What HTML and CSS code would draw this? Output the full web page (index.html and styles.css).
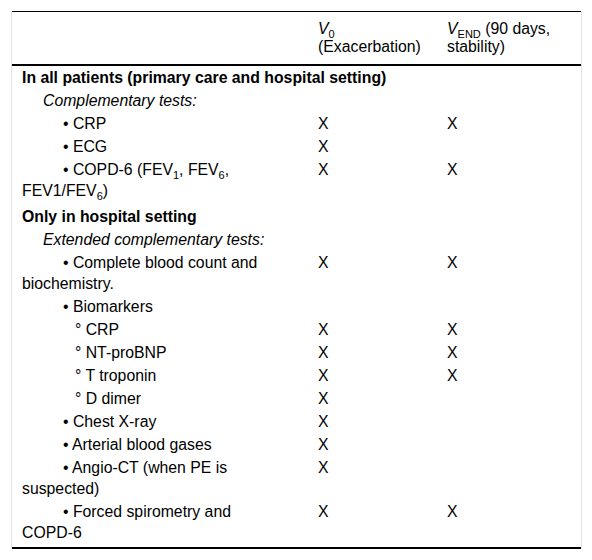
FILE: index.html
```html
<!DOCTYPE html>
<html>
<head>
<meta charset="utf-8">
<link rel="stylesheet" href="styles.css">
</head>
<body>
<div class="wrap">
<table class="tbl">
<colgroup><col class="c1"><col class="c2"><col class="c3"></colgroup>
<thead>
<tr><th></th><th><i>V</i><sub>0</sub><br>(Exacerbation)</th><th><i>V</i><sub>END</sub> (90 days, stability)</th></tr>
</thead>
<tbody>
<tr><td class="grp" colspan="3">In all patients (primary care and hospital setting)</td></tr>
<tr><td class="sub-h" colspan="3">Complementary tests:</td></tr>
<tr><td class="b1">• CRP</td><td>X</td><td>X</td></tr>
<tr><td class="b1">• ECG</td><td>X</td><td></td></tr>
<tr class="tall"><td class="b1">• COPD-6 (FEV<sub>1</sub>, FEV<sub>6</sub>, FEV1/FEV<sub>6</sub>)</td><td>X</td><td>X</td></tr>
<tr><td class="grp" colspan="3">Only in hospital setting</td></tr>
<tr><td class="sub-h" colspan="3">Extended complementary tests:</td></tr>
<tr><td class="b1">• Complete blood count and biochemistry.</td><td>X</td><td>X</td></tr>
<tr><td class="b1">• Biomarkers</td><td></td><td></td></tr>
<tr><td class="b2">° CRP</td><td>X</td><td>X</td></tr>
<tr><td class="b2">° NT-proBNP</td><td>X</td><td>X</td></tr>
<tr><td class="b2">° T troponin</td><td>X</td><td>X</td></tr>
<tr><td class="b2">° D dimer</td><td>X</td><td></td></tr>
<tr><td class="b1">• Chest X-ray</td><td>X</td><td></td></tr>
<tr><td class="b1">• Arterial blood gases</td><td>X</td><td></td></tr>
<tr><td class="b1">• Angio-CT (when PE is suspected)</td><td>X</td><td></td></tr>
<tr class="last"><td class="b1">• Forced spirometry and COPD-6</td><td>X</td><td>X</td></tr>
</tbody>
</table>
</div>
</body>
</html>
```
FILE: styles.css
```css
html, body {
  margin: 0;
  padding: 0;
  background: #fff;
}
body {
  font-family: "Liberation Sans", Arial, sans-serif;
  font-size: 15.8px;
  color: #000;
}
.wrap {
  margin: 11px 0 0 11px;
  width: 569px;
  border-left: 1px solid #e2e2e2;
  border-right: 1px solid #e2e2e2;
}
.tbl {
  width: 569px;
  border-collapse: collapse;
  table-layout: fixed;
  border-top: 1px solid #000;
  border-bottom: 2px solid #000;
}
.c1 { width: 296px; }
.c2 { width: 129px; }
.c3 { width: 144px; }
.tbl th {
  font-weight: normal;
  text-align: left;
  vertical-align: top;
  padding: 8px 10px 8px;
  line-height: 18px;
  border-bottom: 2px solid #000;
}
.tbl td {
  padding: 1px 10px;
  line-height: 21px;
  vertical-align: top;
}
.tbl sub {
  font-size: 11px;
  line-height: 0;
}
.grp { font-weight: bold; }
.sub-h { font-style: italic; text-indent: 21px; }
.tbl td.b1 { text-indent: 41px; padding-right: 26px; }
.tbl td.b2 { text-indent: 53px; }
.tbl .tall td { padding-bottom: 4px; }
.tbl .last td { padding-bottom: 4px; }
```
